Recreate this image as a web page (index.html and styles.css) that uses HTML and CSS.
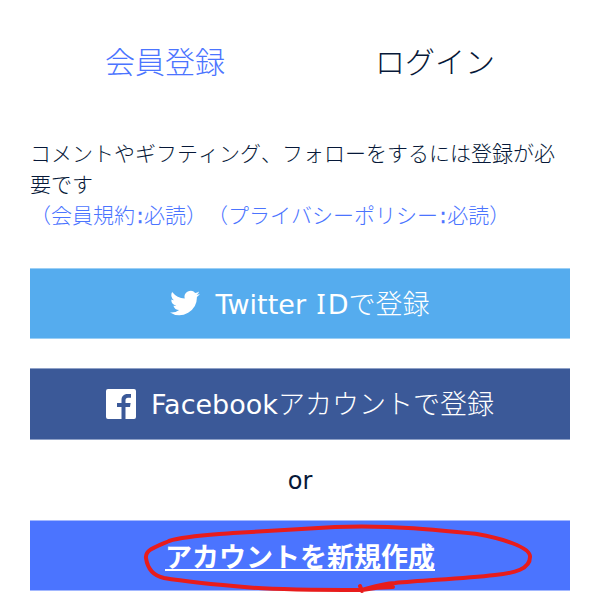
FILE: index.html
```html
<!DOCTYPE html>
<html lang="ja">
<head>
<meta charset="utf-8">
<title>会員登録</title>
<link rel="stylesheet" href="styles.css">
</head>
<body>
<main class="panel">
  <nav class="tabs">
    <a class="tab active">会員登録</a>
    <a class="tab">ログイン</a>
  </nav>
  <p class="intro">コメントやギフティング、フォローをするには登録が必<br>要です<br><span class="terms">（会員規約<span class="latin colon">:</span>必読）（プライバシーポリシー<span class="latin colon">:</span>必読）</span></p>
  <a class="btn twitter">
    <svg class="bird" viewBox="0 0 24 24"><path d="M24 4.600a10 10 0 0 1-2.800.8 5 5 0 0 0 2.100-2.700 10 10 0 0 1-3.100 1.200 4.900 4.900 0 0 0-8.400 4.500A14 14 0 0 1 1.700 3.200a4.900 4.900 0 0 0 1.500 6.500 5 5 0 0 1-2.200-.6 4.900 4.900 0 0 0 3.900 4.900 5 5 0 0 1-2.200.1 4.900 4.900 0 0 0 4.600 3.400A9.900 9.900 0 0 1 0 19.500 14 14 0 0 0 21.500 7.100 10 10 0 0 0 24 4.600z"/></svg>
    <span><span class="latin">Twitter <span class="cap">I</span>D</span>で登録</span>
  </a>
  <a class="btn facebook">
    <svg class="fb" viewBox="0 0 30 30"><path d="M2 0h26a2 2 0 0 1 2 2v26a2 2 0 0 1-2 2h-8.500V18h4.500l.6-4h-5.100v-2.700c0-1.600.8-2.500 2.500-2.500h3V5h-3.500c-3.800 0-6 2.400-6 6v3H11v4h4.500v12H2a2 2 0 0 1-2-2V2a2 2 0 0 1 2-2z"/></svg>
    <span><span class="latin">Facebook</span>アカウントで登録</span>
  </a>
  <div class="or">or</div>
  <a class="btn create"><span>アカウントを新規作成</span>
    <svg class="mark" viewBox="0 0 400 80"><path d="M263 72C250 72 242 73 232 75C195 75 150 75 120 72.500C90 70 52 66 34 63C20 60 17 50 16 43C15 35 25 32 39 26C55 21 80 20 103 18C140 16 170 14 205 12C265 10 310 15 347 19C370 23 401 32 400 42C400 54 385 58 365 60C330 64 295 65 265 68C250 69 240 73 232 75M230 71L232 76"/></svg>
  </a>
</main>
</body>
</html>
```
FILE: styles.css
```css
* { box-sizing: border-box; }
body { margin: 0; background: #fff; color: #061838; font-family: "DejaVu Sans", "Noto Sans CJK JP", sans-serif; }
.panel { width: 600px; height: 608px; padding: 25px 30px 0; }
.tabs { display: grid; grid-template-columns: 1fr 1fr; height: 71px; font: 300 30px/71px "Noto Sans CJK JP", sans-serif; text-align: center; }
.active, .terms { color: #4b74ff; }
.intro { margin: 41px 0 0; height: 131px; font: 300 21px/31px "Noto Sans CJK JP", sans-serif; font-kerning: none; text-spacing-trim: space-all; white-space: nowrap; }
.latin { font-family: "DejaVu Sans", sans-serif; font-weight: 400; }
.colon { padding: 0 0.500px 0 1.500px; -webkit-text-stroke: 0.400px currentColor; }
.cap { padding: 0 2px; font-family: "Noto Sans", sans-serif; }
.btn { display: flex; align-items: center; justify-content: center; position: relative; height: 71px; border: solid; border-width: 1px 0; color: #fff; font: 300 27px/40px "Noto Sans CJK JP", sans-serif; white-space: nowrap; }
.twitter { background: #55acee; border-color: #9bcff5; }
.facebook { height: 72px; background: #3b5998; border-color: #8fa1c7; margin-top: 29px; }
.create { background: #4b74ff; border-color: #a3b8ff; font-weight: 700; text-decoration: underline; }
.or { height: 80px; line-height: 82px; text-align: center; font-size: 24px; }
.bird, .fb { width: 30px; height: 30px; margin: 0 15px 1px 0; fill: currentColor; }
.mark { position: absolute; left: 100px; top: -6px; width: 400px; height: 80px; overflow: visible; fill: none; stroke: #e81c1c; stroke-width: 4; stroke-linecap: round; stroke-linejoin: round; }
```
